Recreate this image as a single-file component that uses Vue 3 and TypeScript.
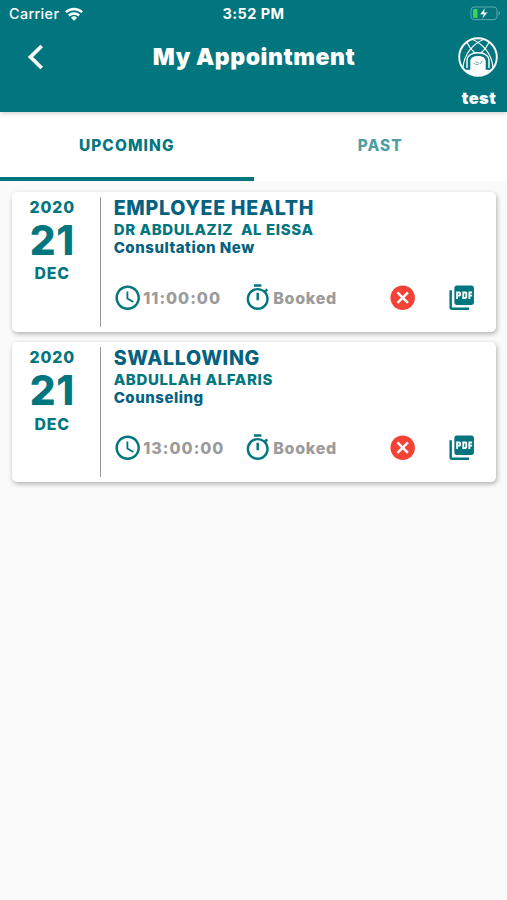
<script setup lang="ts">
interface Appointment {
  year: string
  day: string
  month: string
  clinic: string
  doctor: string
  service: string
  time: string
  status: string
}

const appointments: Appointment[] = [
  {
    year: '2020', day: '21', month: 'DEC',
    clinic: 'EMPLOYEE HEALTH', doctor: 'DR ABDULAZIZ  AL EISSA', service: 'Consultation New',
    time: '11:00:00', status: 'Booked',
  },
  {
    year: '2020', day: '21', month: 'DEC',
    clinic: 'SWALLOWING', doctor: 'ABDULLAH ALFARIS', service: 'Counseling',
    time: '13:00:00', status: 'Booked',
  },
]
</script>

<template>
  <div class="screen">
    <header class="header">
      <div class="status-bar">
        <div class="carrier">
          <span class="carrier-name">Carrier</span>
          <svg class="wifi" viewBox="0 0 18 14" width="18" height="14">
            <g fill="none" stroke="#fff" stroke-width="2.5">
              <path d="M0.9 5.2a11.6 11.6 0 0 1 16.2 0" />
              <path d="M3.9 8.5a7.3 7.3 0 0 1 10.2 0" />
            </g>
            <path d="M9 13.8L6 10.8a4.3 4.3 0 0 1 6 0z" fill="#fff" />
          </svg>
        </div>
        <span class="clock-text">3:52 PM</span>
        <svg class="battery" viewBox="0 0 32 16" width="32" height="16">
          <rect x="1" y="1" width="26" height="12.6" rx="3.2" fill="none" stroke="#5ea6ac" stroke-width="1" />
          <path d="M28.6 5.100c2 .8 2 3.600 0 4.400z" fill="#5ea6ac" />
          <rect x="3" y="2.900" width="4.500" height="9" rx="1.200" fill="#35d651" />
          <path d="M15.400 1.600L9.800 8.400h3.600L12 13.200l5.900-7H14.200z" fill="#fff" stroke="#02767f" stroke-width=".5" />
        </svg>
      </div>
      <div class="title-bar">
        <svg class="back" viewBox="0 0 18 26" width="18" height="26">
          <path d="M15.700 2L4.500 13l11.200 11" fill="none" stroke="#fff" stroke-width="3.800" />
        </svg>
        <h1 class="title">My Appointment</h1>
        <div class="profile">
          <svg viewBox="0 0 40 40" width="40" height="40">
            <circle cx="20" cy="20" r="18.800" fill="none" stroke="#fff" stroke-width="1.900" />
            <g fill="none" stroke="#fff" stroke-width="1.100">
              <path d="M14.500 2.500C24 6.500 34 16 35 31" />
              <path d="M25.500 2.500C16 6.500 6 16 5 31" />
              <path d="M9 5.500C11 10 13.500 13 17 16" />
              <path d="M31 5.500C29 10 26.500 13 23 16" />
            </g>
            <path d="M9 31V24C9 19 13 15.800 20 15.800S31 19 31 24V31" fill="none" stroke="#fff" stroke-width="1.400" />
            <path d="M6 32.700h6.300V24.500c0-3.600 3.200-5.400 7.700-5.400s7.700 1.800 7.700 5.400v8.200H34C31 36.500 26 39 20 39S9 36.500 6 32.700z" fill="#fff" />
            <path d="M16 25.700c.8 2.300 3.700 2.600 5.300.6m-3.600-1.100h2.400m1.800 1.800l2.500-3.200" fill="none" stroke="#4d9ba1" stroke-width=".9" />
          </svg>
          <span class="profile-name">test</span>
        </div>
      </div>
    </header>

    <nav class="tabs">
      <button class="tab active">UPCOMING</button>
      <button class="tab">PAST</button>
    </nav>

    <main class="list">
      <article v-for="item in appointments" :key="item.clinic" class="card">
        <div class="date">
          <span class="year">{{ item.year }}</span>
          <span class="day">{{ item.day }}</span>
          <span class="month">{{ item.month }}</span>
        </div>
        <div class="details">
          <span class="clinic">{{ item.clinic }}</span>
          <span class="doctor">{{ item.doctor }}</span>
          <span class="service">{{ item.service }}</span>
          <div class="meta">
            <div class="meta-item">
              <svg class="icon" viewBox="0 0 24 24">
                <path d="M11.990 2C6.470 2 2 6.480 2 12s4.470 10 9.990 10C17.520 22 22 17.520 22 12S17.520 2 11.990 2zM12 20c-4.420 0-8-3.580-8-8s3.580-8 8-8 8 3.580 8 8-3.580 8-8 8zM12.500 7H11v6l5.250 3.150.75-1.230-4.500-2.670z" />
              </svg>
              <span class="meta-text time-text">{{ item.time }}</span>
            </div>
            <div class="meta-item">
              <svg class="icon" viewBox="0 0 24 24">
                <path d="M15 1H9v2h6V1zm-4 13h2V8h-2v6zm8.030-6.610l1.420-1.420c-.43-.51-.9-.99-1.410-1.410l-1.420 1.420C16.070 4.740 14.120 4 12 4c-4.970 0-9 4.030-9 9s4.020 9 9 9 9-4.030 9-9c0-2.120-.74-4.070-1.970-5.610zM12 20c-3.870 0-7-3.130-7-7s3.130-7 7-7 7 3.130 7 7-3.130 7-7 7z" />
              </svg>
              <span class="meta-text">{{ item.status }}</span>
            </div>
            <svg class="icon cancel" viewBox="0 0 24 24">
              <path d="M12 2C6.470 2 2 6.470 2 12s4.470 10 10 10 10-4.470 10-10S17.530 2 12 2zm5 13.590L15.590 17 12 13.410 8.410 17 7 15.590 10.590 12 7 8.410 8.410 7 12 10.590 15.590 7 17 8.410 13.410 12 17 15.590z" />
            </svg>
            <svg class="icon" viewBox="0 0 24 24">
              <path d="M20 2H8c-1.100 0-2 .9-2 2v12c0 1.100.9 2 2 2h12c1.100 0 2-.9 2-2V4c0-1.100-.9-2-2-2zm-8.500 7.500c0 .83-.67 1.500-1.500 1.500H9v2H7.500V7H10c.83 0 1.500.67 1.500 1.500v1zm5 2c0 .83-.67 1.500-1.500 1.500h-2.500V7H15c.83 0 1.500.67 1.500 1.500v3zm4-3H19v1h1.500V11H19v2h-1.500V7h3v1.500zM9 9.500h1v-1H9v1zM4 6H2v14c0 1.100.9 2 2 2h14v-2H4V6zm10 5.500h1v-3h-1v3z" />
            </svg>
          </div>
        </div>
      </article>
    </main>
  </div>
</template>

<style>
body {
  background: #fafafa;
}
</style>

<style scoped>
.screen {
  width: 507px;
  height: 900px;
  overflow: hidden;
  background: #fafafa;
  font-family: Inter, "Liberation Sans", sans-serif;
  color: #02767f;
}
.header {
  position: relative;
  height: 112px;
  box-sizing: border-box;
  background: #02767f;
  color: #fff;
  box-shadow: 0 1px 5px rgba(0, 0, 0, 0.22);
}
.status-bar {
  display: grid;
  grid-template-columns: 1fr auto 1fr;
  align-items: center;
  height: 27px;
  padding: 0 5px 0 9px;
}
.carrier {
  display: flex;
  align-items: center;
  gap: 5.500px;
}
.carrier-name {
  font-size: 14.400px;
  font-weight: 500;
  letter-spacing: 0.35px;
}
.clock-text {
  margin-right: 4px;
  font-size: 14.500px;
  font-weight: 700;
  letter-spacing: 0.45px;
}
.battery {
  justify-self: end;
}
.title-bar {
  display: grid;
  grid-template-columns: 80px 1fr 80px;
  align-items: start;
}
.back {
  margin: 17px 0 0 26px;
}
.title {
  margin: 15px 0 0 1px;
  text-align: center;
  font-size: 23px;
  line-height: 30px;
  font-weight: 900;
  letter-spacing: 0.55px;
}
.profile {
  display: flex;
  flex-direction: column;
  align-items: center;
  padding: 9.500px 0 0 21px;
}
.profile-name {
  margin: 11.500px 0 0 3px;
  font-size: 16.500px;
  line-height: 20px;
  font-weight: 900;
  letter-spacing: 0.4px;
}
.tabs {
  display: flex;
  height: 69px;
  background: #fff;
}
.tab {
  flex: 1;
  display: flex;
  align-items: center;
  justify-content: center;
  padding: 3px 0 1px;
  border: 0;
  border-bottom: 4px solid transparent;
  background: none;
  font: inherit;
  font-size: 15.400px;
  font-weight: 800;
  letter-spacing: 1.100px;
  color: #509fa5;
}
.tab.active {
  color: #02767f;
  border-bottom-color: #02767f;
}
.list {
  display: flex;
  flex-direction: column;
  gap: 10.400px;
  padding: 10.800px 11px 0 12px;
}
.card {
  display: flex;
  height: 140px;
  box-sizing: border-box;
  padding: 5px 0;
  border-radius: 5px;
  background: #fff;
  box-shadow: 1px 2px 5px rgba(0, 0, 0, 0.3);
}
.date {
  display: flex;
  flex-direction: column;
  align-items: center;
  width: 89px;
  box-sizing: border-box;
  padding-right: 7.500px;
  border-right: 1px solid #999;
  font-weight: 800;
}
.year,
.month {
  font-size: 15.800px;
  line-height: 20px;
  letter-spacing: 0.9px;
}
.year {
  margin-top: 0.8px;
}
.day {
  font-size: 40.500px;
  line-height: 46px;
  letter-spacing: 0.6px;
}
.month {
  margin-top: 0.6px;
}
.details {
  display: flex;
  flex: 1;
  flex-direction: column;
  padding-left: 12.700px;
  white-space: pre;
}
.clinic {
  font-size: 19.600px;
  line-height: 23px;
  font-weight: 800;
  letter-spacing: 0.7px;
  color: #04617f;
}
.doctor {
  font-size: 15px;
  line-height: 19px;
  font-weight: 800;
  letter-spacing: 0.62px;
}
.service {
  font-size: 15px;
  line-height: 18px;
  font-weight: 800;
  letter-spacing: 0.53px;
  color: #04617f;
}
.meta {
  display: grid;
  grid-template-columns: 130px 145px 59px auto;
  align-items: center;
  margin: 26px 0 0 -0.400px;
  height: 30px;
}
.meta-item {
  display: flex;
  align-items: center;
}
.meta-text {
  margin-left: 0.600px;
  font-size: 16px;
  font-weight: 800;
  line-height: 20px;
  color: #9b9b9b;
  letter-spacing: 0.7px;
}
.time-text {
  letter-spacing: 1px;
}
.icon {
  width: 29.400px;
  height: 29.400px;
  flex: none;
  fill: #02767f;
}
.cancel {
  fill: #f44336;
}
</style>
